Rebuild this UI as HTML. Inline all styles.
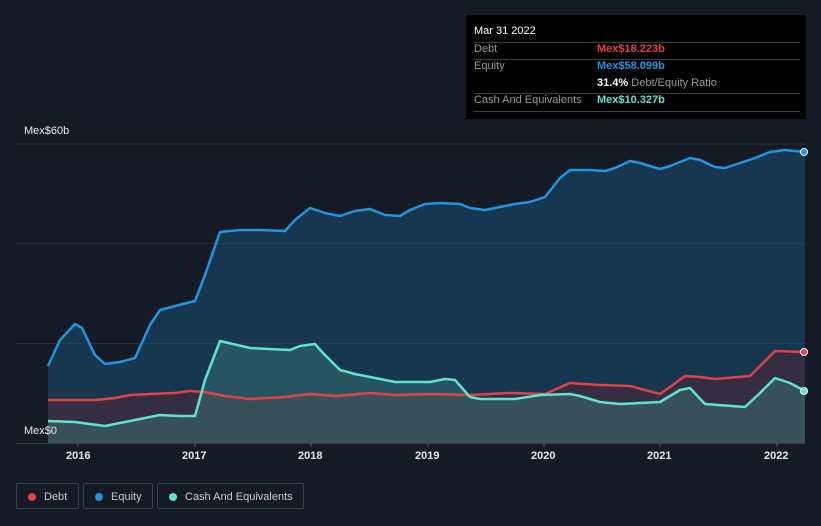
<!DOCTYPE html><html><head><style>
body{margin:0;width:821px;height:526px;background:#151b26;font-family:"Liberation Sans",sans-serif;overflow:hidden;position:relative}
.tt{position:absolute;left:466px;top:15px;width:340px;height:104px;background:#000;color:#fff;font-size:11px}
.tt .r{position:absolute;left:8px;right:6px;border-top:1px solid #3a3d42}
.tt span{position:absolute}
.lg{position:absolute;top:483px;height:26px;border:1px solid #3c4350;border-radius:2px;color:#c8ccd2;font-size:11px;line-height:26px;box-sizing:border-box}
.lg i{position:absolute;left:11px;top:9px;width:8px;height:8px;border-radius:50%}
.lg b{font-weight:normal;position:absolute;left:27px}
.ax{position:absolute;top:450px;color:#e6e8eb;font-size:11px;font-weight:bold}
</style></head><body>
<svg width="821" height="526" style="position:absolute;left:0;top:0">
<g stroke="#2a303b" stroke-width="1"><line x1="16" y1="144" x2="805" y2="144"/><line x1="16" y1="243.5" x2="805" y2="243.5"/><line x1="16" y1="343.5" x2="805" y2="343.5"/><line x1="16" y1="443.5" x2="805" y2="443.5" stroke="#3a404b"/></g>
<polygon fill="#1a4d72" fill-opacity="0.55" points="48,443 48,366 60,340 75,324 82,328 95,355 105,364 120,362 135,358 150,325 160,310 175,306 195,301 205,275 220,232 240,230 260,230 285,231 295,220 310,208 325,213 340,216 355,211 370,209 385,215 400,216 410,210 425,204 440,203 460,204 470,208 485,210 500,207 515,204 530,202 545,197 560,178 570,170 590,170 605,171 615,168 630,161 640,163 660,169 670,166 690,158 700,160 715,167 725,168 740,163 755,158 770,152 785,150 805,152 805,443"/>
<polygon fill="#4a2a3a" fill-opacity="0.6" points="48,443 48,400 95,400 115,398 130,395 150,394 175,393 190,391 205,392 225,396 250,399 285,397 310,394 335,396 370,393 395,395 430,394 470,395 510,393 545,394 570,383 600,385 630,386 660,394 670,387 685,376 700,377 715,379 750,376 760,366 775,351 805,352 805,443"/>
<polygon fill="#3a7a78" fill-opacity="0.45" points="48,443 48,421 75,422 105,426 135,420 160,415 180,416 195,416 205,380 220,341 250,348 290,350 300,346 315,344 322,352 340,370 355,374 375,378 395,382 430,382 445,379 455,380 470,397 480,399 515,399 540,395 570,394 580,396 600,402 620,404 660,402 680,390 690,388 705,404 745,407 760,393 775,378 790,383 805,391 805,443"/>
<g fill="none" stroke-width="2.5" stroke-linejoin="round">
<polyline stroke="#2394df" points="48,366 60,340 75,324 82,328 95,355 105,364 120,362 135,358 150,325 160,310 175,306 195,301 205,275 220,232 240,230 260,230 285,231 295,220 310,208 325,213 340,216 355,211 370,209 385,215 400,216 410,210 425,204 440,203 460,204 470,208 485,210 500,207 515,204 530,202 545,197 560,178 570,170 590,170 605,171 615,168 630,161 640,163 660,169 670,166 690,158 700,160 715,167 725,168 740,163 755,158 770,152 785,150 805,152"/>
<polyline stroke="#e0424b" points="48,400 95,400 115,398 130,395 150,394 175,393 190,391 205,392 225,396 250,399 285,397 310,394 335,396 370,393 395,395 430,394 470,395 510,393 545,394 570,383 600,385 630,386 660,394 670,387 685,376 700,377 715,379 750,376 760,366 775,351 805,352"/>
<polyline stroke="#5fe3cf" points="48,421 75,422 105,426 135,420 160,415 180,416 195,416 205,380 220,341 250,348 290,350 300,346 315,344 322,352 340,370 355,374 375,378 395,382 430,382 445,379 455,380 470,397 480,399 515,399 540,395 570,394 580,396 600,402 620,404 660,402 680,390 690,388 705,404 745,407 760,393 775,378 790,383 805,391"/>
</g>
<circle cx="804" cy="152" r="3.5" fill="#2394df" stroke="#fff" stroke-width="1"/>
<circle cx="804" cy="352" r="3.5" fill="#e0424b" stroke="#fff" stroke-width="1"/>
<circle cx="804" cy="391" r="3.5" fill="#5fe3cf" stroke="#fff" stroke-width="1"/>
<g stroke="#555c66"><line x1="78" y1="443" x2="78" y2="447"/><line x1="195" y1="443" x2="195" y2="447"/><line x1="311" y1="443" x2="311" y2="447"/><line x1="428" y1="443" x2="428" y2="447"/><line x1="544" y1="443" x2="544" y2="447"/><line x1="660" y1="443" x2="660" y2="447"/><line x1="777" y1="443" x2="777" y2="447"/></g>
</svg>
<div style="position:absolute;left:24px;top:125px;color:#e6e8eb;font-size:11px">Mex$60b</div>
<div style="position:absolute;left:24px;top:425px;color:#e6e8eb;font-size:11px">Mex$0</div>
<div class="ax" style="left:66px">2016</div><div class="ax" style="left:182px">2017</div><div class="ax" style="left:298px">2018</div><div class="ax" style="left:415px">2019</div><div class="ax" style="left:531px">2020</div><div class="ax" style="left:647px">2021</div><div class="ax" style="left:764px">2022</div>
<div class="tt">
<span style="left:8px;top:10px">Mar 31 2022</span>
<div class="r" style="top:27px"></div>
<span style="left:8px;top:28px;color:#999">Debt</span><span style="left:131px;top:28px;color:#e0424b;font-weight:bold">Mex$18.223b</span>
<div class="r" style="top:44px"></div>
<span style="left:8px;top:45px;color:#999">Equity</span><span style="left:131px;top:45px;color:#2394df;font-weight:bold">Mex$58.099b</span>
<span style="left:131px;top:62px"><b>31.4%</b> <span style="position:static;color:#999">Debt/Equity Ratio</span></span>
<div class="r" style="top:78px"></div>
<span style="left:8px;top:79px;color:#999">Cash And Equivalents</span><span style="left:131px;top:79px;color:#5fe3cf;font-weight:bold">Mex$10.327b</span>
<div class="r" style="top:96px"></div>
</div>
<div class="lg" style="left:16px;width:63px"><i style="background:#e0424b"></i><b>Debt</b></div>
<div class="lg" style="left:83px;width:70px"><i style="background:#2394df"></i><b>Equity</b></div>
<div class="lg" style="left:157px;width:147px"><i style="background:#5fe3cf"></i><b>Cash And Equivalents</b></div>
</body></html>
